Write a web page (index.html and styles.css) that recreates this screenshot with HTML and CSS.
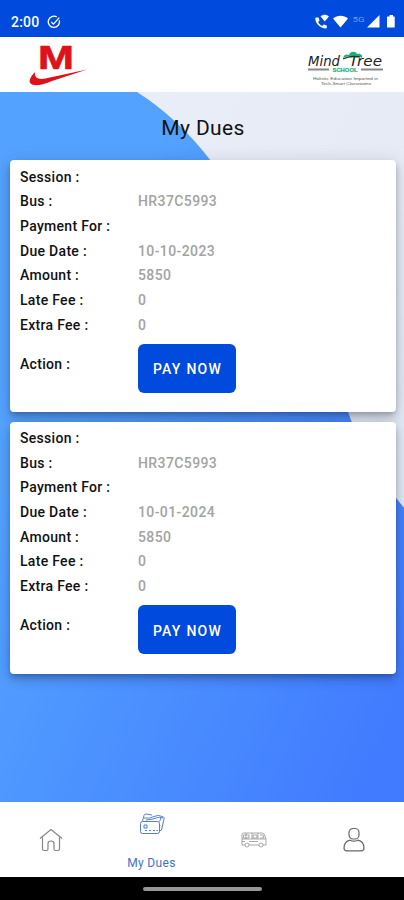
FILE: index.html
```html
<!DOCTYPE html>
<html lang="en">
<head>
<meta charset="utf-8">
<meta name="viewport" content="width=device-width, initial-scale=1">
<title>My Dues</title>
<link rel="stylesheet" href="styles.css">
</head>
<body>
<div class="status">
  <span class="time">2:00</span>
  <svg class="check" width="14" height="14" viewBox="0 0 14 14" fill="none" stroke="#fff" stroke-width="1.3"><path d="M9.8 2A5.6 5.6 0 1 0 12.3 5.4M4.2 7l2.2 2.1L12.3 2.6"/></svg>
  <svg class="signals" width="82" height="18" viewBox="0 0 82 18" fill="#fff">
    <path d="M2.3 4.500h2.300l.9 3-1.400 1.600c.8 1.800 2.100 3 4 3.900l1.600-1.500 3.100 1v2.200c0 .5-.5.8-1 .8C6 15.200 1.400 10.700 1.300 5.500c0-.6.4-1 1-1z"/>
    <path d="M6.500 3.300c2.500-2.200 6-2.200 8.500 0L10.800 8.400z"/>
    <path d="M19 5.500c4.500-3.800 10.500-3.800 15 0l-7.500 9z"/>
    <text class="network" x="38.500" y="8.600" textLength="12" lengthAdjust="spacingAndGlyphs">5G</text>
    <path d="M65.500 2v12.500H53zM73.500 3.500h2V2h3.500v1.500h1.700v11h-7.700V4z"/>
  </svg>
</div>
<header class="header">
  <svg class="brand" width="62" height="46" viewBox="0 0 62 46" fill="#df1119">
    <text class="brand-letter" x="10" y="25.300" textLength="36" lengthAdjust="spacingAndGlyphs">M</text>
    <path d="M7 28C2 33-.5 38.500 4 40.500c5 2 12-.4 20-3.500L59 25.500 22 33.600C12 36 6 35.500 7 28z"/>
  </svg>
  <svg class="school" width="80" height="38" viewBox="0 0 80 38">
    <path d="M39 8c1-4 4-4 6-3 1-4 7-4 8-1 4-1 6 2 5 4-3-2-5-2-7-1-4-2-8-1-12 1z" fill="#22ac78"/>
    <text class="hand" x="4" y="16" textLength="32" lengthAdjust="spacingAndGlyphs">Mind</text>
    <text class="hand" x="45" y="16" textLength="33" lengthAdjust="spacingAndGlyphs">Tree</text>
    <path d="M39 9q7-4 17-2" stroke="#173c30" stroke-width="1.200" fill="none"/>
    <path d="M4 19.500h21M57 19.500h22" stroke="#888" stroke-width="2"/>
    <text class="school-name" x="28.500" y="22" textLength="25" lengthAdjust="spacingAndGlyphs">SCHOOL</text>
    <text class="motto" x="9" y="30.200" textLength="65" lengthAdjust="spacingAndGlyphs">Holistic Education Imparted in</text>
    <text class="motto" x="17" y="35" textLength="50" lengthAdjust="spacingAndGlyphs">Tech-Smart Classrooms</text>
  </svg>
</header>
<main class="content">
  <svg class="backdrop" viewBox="0 0 404 710" aria-hidden="true">
    <defs>
      <linearGradient id="blue" gradientUnits="userSpaceOnUse" x1="40" y1="320" x2="450" y2="500"><stop offset="0" stop-color="#54a2ff"/><stop offset="1" stop-color="#417bff"/></linearGradient>
      <linearGradient id="pale" x1="0" y1="0" x2="1" y2="1"><stop offset="0" stop-color="#e9effb"/><stop offset=".5" stop-color="#e7ebf5"/><stop offset="1" stop-color="#d9e5f4"/></linearGradient>
    </defs>
    <path d="M0 0h404v710H0z" fill="url(#pale)"/>
    <path d="M0 0h137Q178 26 211 69C285 160 320 235 346 314Q362 364 404 416V710H0z" fill="url(#blue)"/>
  </svg>
  <h1 class="title">My Dues</h1>
  <section class="card">
    <dl class="details">
      <dt>Session :</dt><dd></dd>
      <dt>Bus :</dt><dd>HR37C5993</dd>
      <dt>Payment For :</dt><dd></dd>
      <dt>Due Date :</dt><dd>10-10-2023</dd>
      <dt>Amount :</dt><dd>5850</dd>
      <dt>Late Fee :</dt><dd>0</dd>
      <dt>Extra Fee :</dt><dd>0</dd>
    </dl>
    <div class="action"><span>Action :</span><button class="pay">PAY NOW</button></div>
  </section>
  <section class="card">
    <dl class="details">
      <dt>Session :</dt><dd></dd>
      <dt>Bus :</dt><dd>HR37C5993</dd>
      <dt>Payment For :</dt><dd></dd>
      <dt>Due Date :</dt><dd>10-01-2024</dd>
      <dt>Amount :</dt><dd>5850</dd>
      <dt>Late Fee :</dt><dd>0</dd>
      <dt>Extra Fee :</dt><dd>0</dd>
    </dl>
    <div class="action"><span>Action :</span><button class="pay">PAY NOW</button></div>
  </section>
</main>
<nav class="tabs">
  <a class="tab"><svg width="26" height="26" viewBox="0 0 26 26"><path d="M2 11.500 13 2.500l11 9M4.500 10.500V22q0 1.500 1.500 1.500h2.500q1.500 0 1.500-1.500v-5.500q0-2.500 3-2.500t3 2.500V22q0 1.500 1.500 1.500H20q1.500 0 1.500-1.500V10.500"/></svg></a>
  <a class="tab active"><svg width="28" height="24" viewBox="0 0 28 24"><rect x="2.500" y="9.500" width="19" height="12" rx="2"/><path d="M4.500 9 6 3.500q.5-1.500 2-1.500l6 1M6 6q6 1 10-1.500T25.500 5q1 .5.500 2L23.500 18 21.500 19M8 8q7-.5 10-2t7 0M21.500 9.500 23 6"/><path d="M6 13h3v3H6zM7 18.500h2m2 0h2m2 0h2m1.500 0h1.500"/></svg><span>My Dues</span></a>
  <a class="tab bus"><svg width="28" height="18" viewBox="0 0 28 18"><path d="M3.500 2H22q2 0 2.500 2L26 8v6H23M19 14H9M5 14H2V3.500Q2 2 3.500 2M2 8h24M6 2v6M12 2v6M18 2v6M3.500 4H9v3H3.500zM13 4h4v3h-4zM20 4h3l1 3h-4M2 10.500h3m4 0h9"/><circle cx="7" cy="14" r="2"/><circle cx="21" cy="14" r="2"/></svg></a>
  <a class="tab person"><svg width="24" height="26" viewBox="0 0 24 26"><rect x="7" y="1.500" width="10" height="10.500" rx="4"/><path d="M8 13.200q4 2 8 0 5.800 1.300 6 7.800 0 2.800-2.800 2.800H4.800Q2 23.800 2 21q.2-6.500 6-7.800z"/></svg></a>
</nav>
<div class="system"><span class="handle"></span></div>
</body>
</html>
```
FILE: styles.css
```css
* { box-sizing: border-box; }
body { margin: 0; width: 404px; height: 900px; display: flex; flex-direction: column; overflow: hidden; font-family: Roboto, sans-serif; background: #fff; }
.status { height: 37px; background: #004bdd; color: #fff; display: flex; align-items: flex-start; padding: 14px 8px 0 11px; }
.time { font-size: 14px; line-height: 17px; font-weight: 500; letter-spacing: .2px; width: 36px; }
.check { margin-top: 1px; }
.signals { margin: -1px 0 0 auto; }
.network { font-size: 8px; fill: #719bee; }
.header { height: 55px; display: flex; justify-content: space-between; padding: 5px 20px 0 28px; }
.brand { margin-top: 2px; overflow: visible; }
.brand-letter { font: 900 34px "Liberation Sans", sans-serif; stroke: #df1119; stroke-width: .7px; }
.school { margin-top: 8px; overflow: visible; }
.hand { font: italic 14px "DejaVu Sans", sans-serif; fill: #222; }
.school-name { font: bold 5.500px "Liberation Sans", sans-serif; fill: #23ad7c; stroke: #23ad7c; stroke-width: .2px; }
.motto { font: 4px "Liberation Sans", sans-serif; fill: #555; }
.content { position: relative; height: 710px; padding: 22px 8px 0 10px; }
.backdrop { position: absolute; inset: 0; width: 100%; height: 100%; }
.title { position: relative; margin: 0 0 18px; height: 28px; font-size: 21px; line-height: 28px; font-weight: 400; text-align: center; letter-spacing: .35px; color: #111; }
.card { position: relative; height: 252px; margin-bottom: 9.500px; padding: 4.500px 10px; border-radius: 4px; background: #fff; box-shadow: 0 3px 5px -1px rgba(0,0,0,.2), 0 6px 10px rgba(0,0,0,.14), 0 1px 18px rgba(0,0,0,.12); }
.details { display: grid; grid-template-columns: 118px 1fr; grid-auto-rows: 24.700px; margin: 0; font-size: 14px; line-height: 24.700px; font-weight: 500; letter-spacing: .3px; color: #111; }
.details dd { margin: 0; color: #a3a3a3; letter-spacing: .4px; }
.action { display: grid; grid-template-columns: 118px 1fr; margin-top: 6.500px; font-size: 14px; line-height: 41px; font-weight: 500; letter-spacing: .3px; color: #111; }
.pay { width: 98px; height: 49px; padding: 2px 0 0 1px; border: 0; border-radius: 6px; background: #004bdd; color: #fff; font: 500 14px Roboto, sans-serif; letter-spacing: 1.250px; }
.tabs { height: 75px; display: grid; grid-template-columns: repeat(4, 1fr); }
.tab { display: flex; flex-direction: column; align-items: center; justify-content: center; color: #858585; font-size: 12px; line-height: 16px; }
.tab svg { fill: none; stroke: currentColor; stroke-width: 1.200; }
.active { justify-content: flex-start; padding-top: 10px; color: #3e73c7; letter-spacing: .35px; }
.active svg { stroke-width: .9; }
.active span { margin-top: 19px; }
.bus svg { stroke-width: .7; margin-left: 2px; }
.person { color: #686868; }
.system { height: 23px; background: #000; display: flex; justify-content: center; padding-top: 10px; }
.handle { width: 119px; height: 4px; border-radius: 2px; background: #969696; }
```
